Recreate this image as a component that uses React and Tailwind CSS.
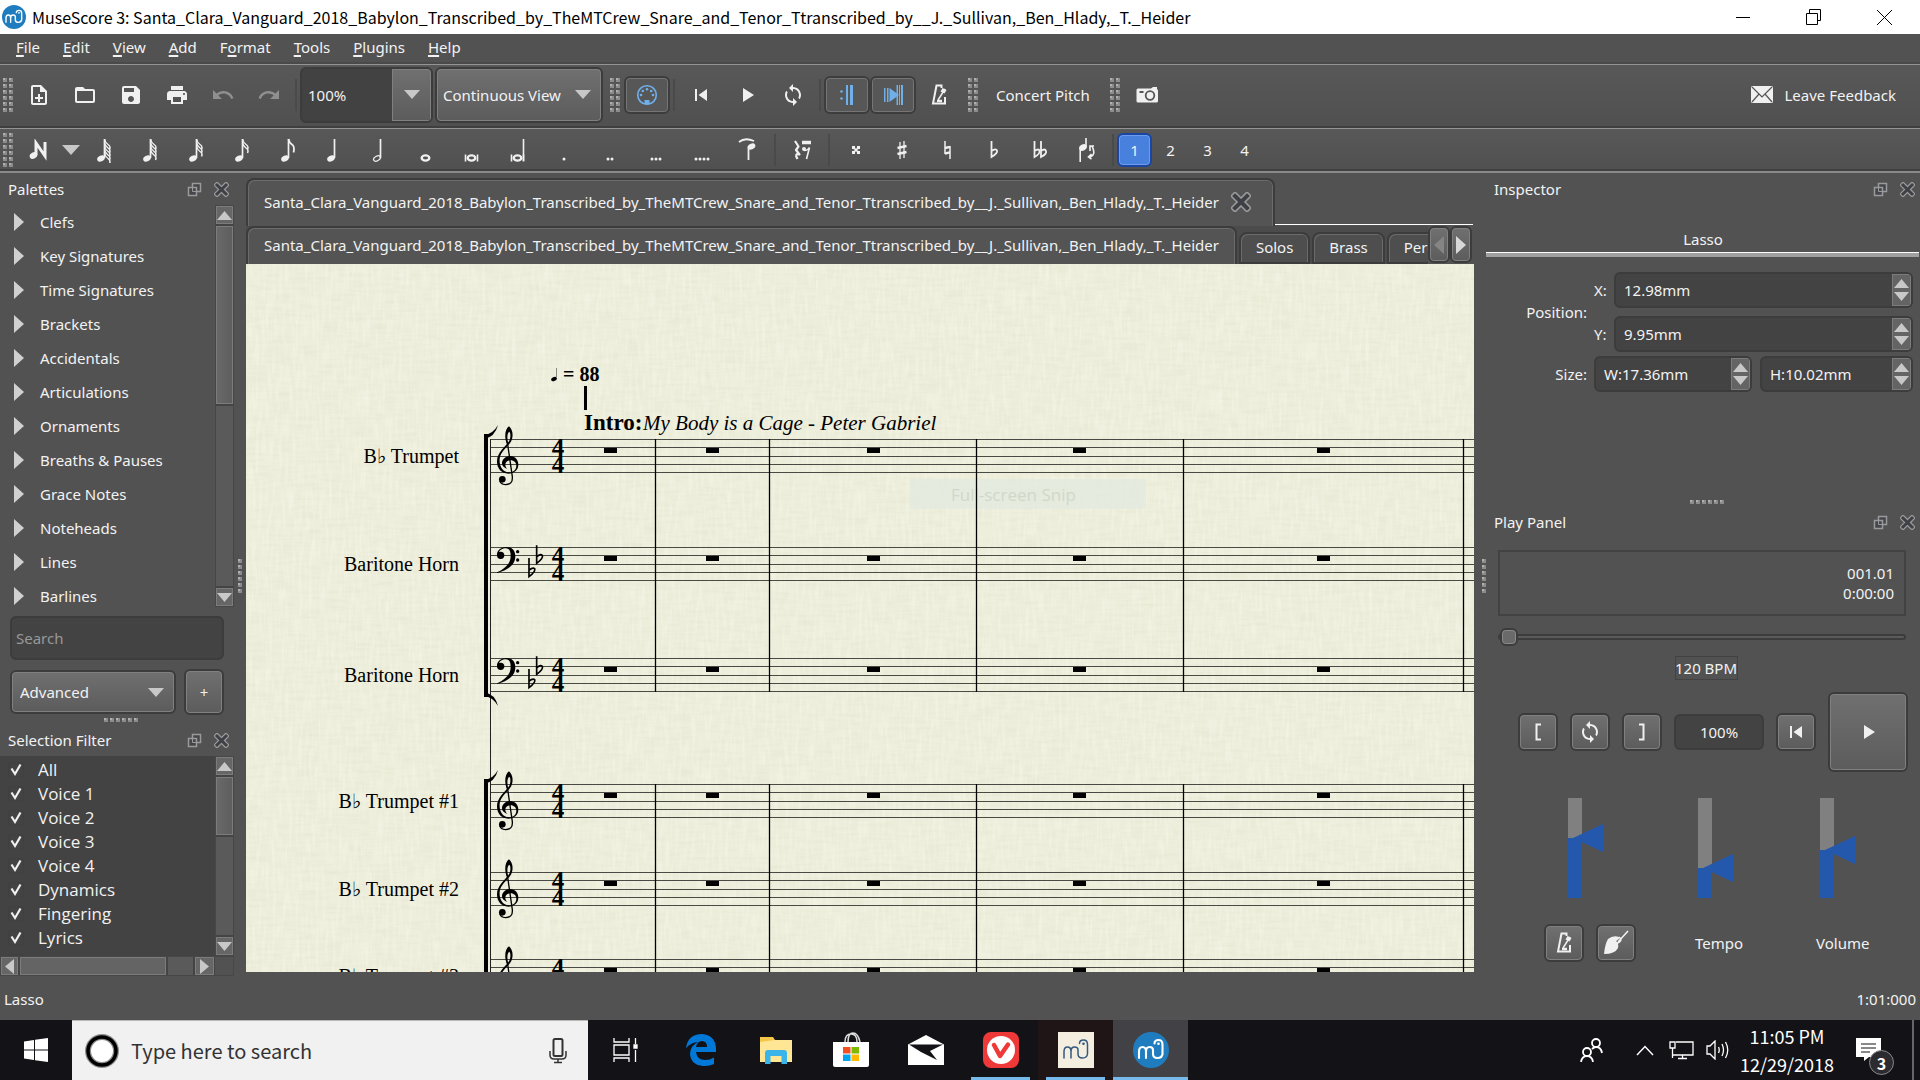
import { useState } from "react";
import {
    MdFolderOpen,
    MdLoop,
    MdOutlineNoteAdd,
    MdPlayArrow,
    MdPrint,
    MdRedo,
    MdSave,
    MdSkipPrevious,
    MdUndo,
} from "react-icons/md";

const SCORE_NAME =
    "Santa_Clara_Vanguard_2018_Babylon_Transcribed_by_TheMTCrew_Snare_and_Tenor_Ttranscribed_by__J._Sullivan,_Ben_Hlady,_T._Heider";

// [before, mnemonic, after]
const MENUS = [
    ["", "F", "ile"],
    ["", "E", "dit"],
    ["", "V", "iew"],
    ["", "A", "dd"],
    ["F", "o", "rmat"],
    ["", "T", "ools"],
    ["", "P", "lugins"],
    ["", "H", "elp"],
];

const PALETTES = [
    "Clefs",
    "Key Signatures",
    "Time Signatures",
    "Brackets",
    "Accidentals",
    "Articulations",
    "Ornaments",
    "Breaths & Pauses",
    "Grace Notes",
    "Noteheads",
    "Lines",
    "Barlines",
];

const FILTERS = [
    "All",
    "Voice 1",
    "Voice 2",
    "Voice 3",
    "Voice 4",
    "Dynamics",
    "Fingering",
    "Lyrics",
    "Chord Symbols",
];

const STAVES = [
    { top: 175, name: "Trumpet", flat: true, clef: "treble" },
    { top: 283, name: "Baritone Horn", clef: "bass" },
    { top: 394, name: "Baritone Horn", clef: "bass" },
    { top: 520, name: "Trumpet #1", flat: true, clef: "treble" },
    { top: 608, name: "Trumpet #2", flat: true, clef: "treble" },
    { top: 695, name: "Trumpet #3", flat: true, clef: "treble" },
];

const BARLINES = [409, 523, 730, 937, 1217];
const RESTS = [358, 460, 621, 827, 1071];

/* ---------- small shared pieces ---------- */

const Arrow = ({ dir, className = "h-[9px] w-[15px] text-[#c8c8c8]" }) => {
    const d = {
        up: "M0 10 L5 0 L10 10Z",
        down: "M0 0 L5 10 L10 0Z",
        left: "M10 0 L0 5 L10 10Z",
        right: "M0 0 L10 5 L0 10Z",
    }[dir];
    return (
        <svg viewBox="0 0 10 10" preserveAspectRatio="none" className={className} aria-hidden="true">
            <path d={d} fill="currentColor" />
        </svg>
    );
};

const Grip = ({ cols = 2, rows = 6 }) => (
    <svg width={cols * 6 - 2} height={rows * 6 - 2} aria-hidden="true" className="shrink-0">
        {Array.from({ length: cols * rows }, (_, i) => {
            const x = (i % cols) * 6;
            const y = Math.floor(i / cols) * 6;
            return (
                <g key={i}>
                    <rect x={x} y={y} width="4" height="4" fill="#8c8c8c" />
                    <rect x={x} y={y} width="2" height="2" fill="#b0b0b0" />
                </g>
            );
        })}
    </svg>
);

const ToolButton = ({ label, children, on, className = "w-[46px]" }) => (
    <button
        type="button"
        aria-label={label}
        className={`flex h-[38px] shrink-0 items-center justify-center ${className} ${
            on
                ? "rounded-md border-2 border-[#3d3d3d] bg-[#575757] text-[#6fb0ea] shadow-[inset_0_0_0_1px_#757575]"
                : "text-[#f0f0f0]"
        }`}
    >
        {children}
    </button>
);

const RaisedButton = ({ label, children, className = "h-[38px] w-10" }) => (
    <button
        type="button"
        aria-label={label}
        className={`flex shrink-0 items-center justify-center rounded-md border-2 border-[#3c3c3c] bg-linear-to-b from-[#707070] to-[#5c5c5c] text-[#f0f0f0] shadow-[inset_0_0_0_1px_#808080] ${className}`}
    >
        {children}
    </button>
);

const Separator = () => <span className="mx-[3px] h-8 w-[2px] shrink-0 bg-[#4a4a4a]" />;

const CloseGlyph = ({ size = 15 }) => (
    <svg width={size} height={size} viewBox="0 0 15 15" aria-hidden="true">
        <path d="M3 3L12 12M12 3L3 12" stroke="#9a9a9a" strokeWidth="5.4" strokeLinecap="square" />
        <path d="M3 3L12 12M12 3L3 12" stroke="#3f4046" strokeWidth="3" strokeLinecap="square" />
    </svg>
);

const DockHeader = ({ title }) => (
    <header className="flex h-8 shrink-0 items-center pr-[5px] pl-2">
        <h2 className="flex-1">{title}</h2>
        <button type="button" aria-label={`Float ${title}`} className="mr-3">
            <svg width="15" height="15" viewBox="0 0 15 15" fill="none" aria-hidden="true">
                <path d="M5.500 1.500H13.500V9.500H5.500Z" fill="#45464c" stroke="#9a9a9a" strokeWidth="1.500" />
                <path d="M1.500 5.500H9.500V13.500H1.500Z" fill="#45464c" stroke="#9a9a9a" strokeWidth="1.500" />
                <path d="M5.500 5.500H9.500V9.500H5.500Z" stroke="#9a9a9a" />
            </svg>
        </button>
        <button type="button" aria-label={`Close ${title}`}>
            <CloseGlyph />
        </button>
    </header>
);

const VerticalScroll = ({ thumb }) => (
    <div className="flex w-[19px] shrink-0 flex-col border border-[#474747] bg-[#5a5a5a]">
        <button type="button" aria-label="Scroll up" className="flex h-[18px] items-center justify-center border border-[#7c7c7c] bg-[#666666]">
            <Arrow dir="up" />
        </button>
        <div className={`mt-[2px] border border-[#7c7c7c] bg-linear-to-r from-[#696969] to-[#5e5e5e] shadow-[0_2px_0_#444444,0_-2px_0_#444444] ${thumb}`} />
        <span className="flex-1" />
        <button type="button" aria-label="Scroll down" className="flex h-[18px] items-center justify-center border border-[#7c7c7c] bg-[#666666] shadow-[0_-2px_0_#444444]">
            <Arrow dir="down" />
        </button>
    </div>
);

/* ---------- toolbar icons ---------- */

const Note = ({ flags = 0, open = false }) => (
    <svg width="20" height="26" viewBox="0 0 20 26" aria-hidden="true">
        <ellipse
            cx="7"
            cy="21.500"
            rx={open ? 3.6 : 4}
            ry={open ? 2.3 : 2.9}
            transform="rotate(-28 7 21.500)"
            fill={open ? "none" : "currentColor"}
            stroke={open ? "currentColor" : "none"}
            strokeWidth="1.300"
        />
        <path d="M10.500 2V21" stroke="currentColor" strokeWidth="1.700" />
        {Array.from({ length: flags }, (_, i) => (
            <path
                key={i}
                d={`M10.500 ${2 + i * 3.5}q.5 3.500 3.500 5.500t1.500 ${flags === 1 ? 8 : 5}`}
                fill="none"
                stroke="currentColor"
                strokeWidth={flags === 1 ? 1.8 : 1.5}
            />
        ))}
    </svg>
);

const Whole = ({ sides, stem }) => (
    <svg width="20" height="26" viewBox="0 0 20 26" aria-hidden="true" fill="none" stroke="currentColor">
        <ellipse cx="9.500" cy="21" rx="3.800" ry="2.600" strokeWidth="2.400" />
        {sides && <path d="M3.500 17.500V24.500M15.500 17.500V24.500" strokeWidth="1.600" />}
        {stem && <path d="M15.500 2V24" strokeWidth="1.600" />}
    </svg>
);

const Dots = ({ count }) => (
    <svg width="20" height="26" viewBox="0 0 20 26" aria-hidden="true">
        {Array.from({ length: count }, (_, i) => (
            <circle key={i} cx={10 + (i - (count - 1) / 2) * 4} cy="22" r="1.500" fill="currentColor" />
        ))}
    </svg>
);

const TieIcon = () => (
    <svg width="22" height="26" viewBox="0 0 22 26" aria-hidden="true">
        <path d="M2 5Q8 0 17 4" fill="none" stroke="currentColor" strokeWidth="1.800" />
        <ellipse cx="14.500" cy="9.500" rx="4" ry="2.900" transform="rotate(-28 14.500 9.500)" fill="currentColor" />
        <path d="M11.500 10V23" stroke="currentColor" strokeWidth="1.800" />
    </svg>
);

const RestIcon = () => (
    <svg width="22" height="26" viewBox="0 0 22 26" aria-hidden="true" fill="none" stroke="currentColor">
        <path d="M4 4L7.500 9.500L5 13L8.500 17.500Q3 16 6.500 22" strokeWidth="2.200" strokeLinejoin="round" />
        <path d="M11 5.500H20" strokeWidth="3.500" />
        <circle cx="13" cy="12" r="2" fill="currentColor" stroke="none" />
        <path d="M13 13.500Q17 13.500 18.500 10.500L15.500 22" strokeWidth="1.600" />
    </svg>
);

const DoubleSharpIcon = () => (
    <svg width="20" height="26" viewBox="0 0 20 26" aria-hidden="true" fill="currentColor">
        <path d="M6 9h3v1.500L10 12l1-1.500V9h3v3h-1.500L11 13l1.500 1H14v3h-3v-1.500L10 14l-1 1.500V17H6v-3h1.500L9 13l-1.500-1H6z" />
    </svg>
);

const SharpIcon = () => (
    <svg width="20" height="26" viewBox="0 0 20 26" aria-hidden="true" stroke="currentColor">
        <path d="M8 5V22M12 4V21" strokeWidth="1.300" />
        <path d="M5.500 11L14.500 9M5.500 17L14.500 15" strokeWidth="2.400" />
    </svg>
);

const NaturalIcon = () => (
    <svg width="20" height="26" viewBox="0 0 20 26" aria-hidden="true" stroke="currentColor">
        <path d="M7 4V17M12 9V22" strokeWidth="1.500" />
        <path d="M7 11L12 9.800M7 16.500L12 15.300" strokeWidth="2.400" />
    </svg>
);

const FlatIcon = ({ twice }) => (
    <svg width="20" height="26" viewBox="0 0 20 26" aria-hidden="true" fill="none" stroke="currentColor" strokeWidth="1.800">
        <path d={twice ? "M4.500 4V20Q10 17 9.500 14T4.500 14" : "M7.500 4V20Q14 16 13 13.500T7.500 14"} />
        {twice && <path d="M11 4V20Q17 17 16 14T11 14" />}
    </svg>
);

const FlipIcon = () => (
    <svg width="22" height="26" viewBox="0 0 22 26" aria-hidden="true">
        <ellipse cx="8" cy="10.500" rx="4" ry="3" transform="rotate(-28 8 10.500)" fill="currentColor" />
        <path d="M5.200 11V25M11 1V10" stroke="currentColor" strokeWidth="1.600" />
        <path d="M14 20Q20 19 18.500 13T15 10M16.500 17L13.500 20L16.500 22M15 14V9h4" fill="none" stroke="currentColor" strokeWidth="1.600" />
    </svg>
);

const NoteInputIcon = () => (
    <svg width="20" height="22" viewBox="0 0 20 22" aria-hidden="true">
        <ellipse cx="4.500" cy="16.500" rx="4" ry="3" transform="rotate(-28 4.500 16.500)" fill="currentColor" />
        <path d="M7 16V4L16 17V3" fill="none" stroke="currentColor" strokeWidth="3" />
    </svg>
);

const MetronomeIcon = () => (
    <svg width="18" height="24" viewBox="0 0 18 24" aria-hidden="true" fill="none" stroke="currentColor">
        <path d="M11.500 5V2.500H6.500L3 20.500H15V14" strokeWidth="2" />
        <path d="M8 17L15 6" strokeWidth="1.500" />
        <path d="M12.500 5l4 2-2 3.500-4-2z" fill="currentColor" stroke="none" />
        <path d="M7 18h5" strokeWidth="2.500" />
    </svg>
);

const MidiIcon = () => (
    <svg width="22" height="22" viewBox="0 0 22 22" aria-hidden="true">
        <circle cx="11" cy="11" r="9.300" fill="none" stroke="currentColor" strokeWidth="1.600" />
        {[[5, 11], [6.8, 7], [11, 5.3], [15.2, 7], [17, 11]].map(([x, y]) => (
            <circle key={x} cx={x} cy={y} r="1.300" fill="currentColor" />
        ))}
        <path d="M8.500 16h5v4.500h-5z" fill="currentColor" />
    </svg>
);

const RepeatIcon = () => (
    <svg width="22" height="22" viewBox="0 0 22 22" aria-hidden="true" fill="currentColor">
        <path d="M10 1h2v20h-2zM14 1h3v20h-3z" />
        <circle cx="5.500" cy="7.500" r="1.300" />
        <circle cx="5.500" cy="14.500" r="1.300" />
    </svg>
);

const PanIcon = () => (
    <svg width="22" height="22" viewBox="0 0 22 22" aria-hidden="true" fill="currentColor">
        <path d="M2 4h1.500v14H2zM5 4h1.500v14H5zM14.500 1H16v20h-1.500zM17 1h1v20h-1zM19 1h2v20h-2z" />
        <path d="M7.500 4L17 11L7.500 18z" />
    </svg>
);

const CameraIcon = () => (
    <svg width="24" height="20" viewBox="0 0 24 20" aria-hidden="true">
        <path d="M3 3.500H16L18 2h4v2q1 .5 1 1.500V16q0 1.500-1.500 1.500H3Q1.500 17.500 1.500 16V5Q1.500 3.500 3 3.500z" fill="#f0f0f0" />
        <circle cx="15" cy="10.500" r="4.300" fill="none" stroke="#555555" strokeWidth="1.800" />
        <path d="M4.500 6h4v2h-4z" fill="#555555" />
    </svg>
);

const MuseLogo = ({ size, square }) => {
    const ink = square ? "#33597f" : "#ffffff";
    return (
        <svg width={size} height={size} viewBox="0 0 36 36" aria-hidden="true">
            {square ? <rect width="36" height="36" fill="#f4eee0" /> : <circle cx="18" cy="18" r="18" fill="#1f7dbf" />}
            <path
                d="M6 26V19.500Q6 15 9.500 15T13 19.500V26M13 19.500Q13 15 16.500 15T20 18V22Q20 26 24.500 26T29.500 22V12.500Q29.500 8 25.500 8T21.500 11.500"
                fill="none"
                stroke={ink}
                strokeWidth={square ? 1.5 : 2.1}
                strokeLinecap="round"
            />
            <circle cx="25.500" cy="11.800" r="1.300" fill={ink} />
        </svg>
    );
};

/* ---------- window chrome ---------- */

const TitleBar = () => (
    <header className="flex h-[34px] shrink-0 items-center bg-white pl-0.5 font-['Noto_Sans_CJK_SC',sans-serif] text-base leading-6 text-black">
        <MuseLogo size={24} />
        <h1 className="ml-1.5 flex-1 whitespace-nowrap">MuseScore 3: {SCORE_NAME}</h1>
        <button type="button" aria-label="Minimize" className="flex h-full w-[70px] items-center justify-center">
            <svg width="14" height="14"><path d="M0 7.500H14" stroke="#000" /></svg>
        </button>
        <button type="button" aria-label="Restore" className="flex h-full w-[70px] items-center justify-center">
            <svg width="15" height="16" fill="none" stroke="#000">
                <path d="M.5 4.500H11.500V15.500H.5ZM3.500 4V.5H14.500V11.500H12" />
            </svg>
        </button>
        <button type="button" aria-label="Close" className="flex h-full w-[72px] items-center justify-center">
            <svg width="15" height="15" stroke="#000"><path d="M0 0L15 15M15 0L0 15" /></svg>
        </button>
    </header>
);

const MenuBar = () => (
    <nav className="flex h-[30px] shrink-0 items-center border-b-2 border-[#4a4a4a] pb-0.5 pl-1">
        {MENUS.map(([pre, key, post]) => (
            <button key={key + post} type="button" className="pr-[11px] pl-3">
                {pre}
                <span className="underline decoration-2 underline-offset-2">{key}</span>
                {post}
            </button>
        ))}
    </nav>
);

const FileToolbar = () => (
    <div className="flex h-16 shrink-0 items-center border-t border-b-2 border-t-[#949494] border-b-[#3f3f3f] bg-linear-to-b from-[#585858] to-[#505050] pb-0.5">
        <div className="flex w-4 shrink-0 justify-center"><Grip /></div>
        <ToolButton label="New"><MdOutlineNoteAdd size={24} /></ToolButton>
        <ToolButton label="Open"><MdFolderOpen size={24} /></ToolButton>
        <ToolButton label="Save"><MdSave size={24} /></ToolButton>
        <ToolButton label="Print"><MdPrint size={24} /></ToolButton>
        <ToolButton label="Undo"><MdUndo size={24} className="text-[#8f8f8f]" /></ToolButton>
        <ToolButton label="Redo"><MdRedo size={24} className="text-[#8f8f8f]" /></ToolButton>
        <Separator />
        <div className="flex h-[56px] w-[133px] shrink-0 overflow-hidden rounded-md border-2 border-[#3c3c3c] bg-[#424242]">
            <input aria-label="Zoom" defaultValue="100%" className="w-0 min-w-0 flex-1 pl-1.5 outline-none" />
            <button type="button" aria-label="Zoom presets" className="flex w-[39px] items-center justify-center border border-[#808080] bg-linear-to-b from-[#707070] to-[#5c5c5c]">
                <Arrow dir="down" className="h-[9px] w-4 text-[#c8c8c8]" />
            </button>
        </div>
        <div className="relative ml-[2px] shrink-0">
            <select aria-label="View mode" className="h-[56px] w-[168px] appearance-none rounded-md border-2 border-[#3c3c3c] bg-linear-to-b from-[#707070] to-[#5c5c5c] pl-1.5 shadow-[inset_0_0_0_1px_#808080]">
                <option>Continuous View</option>
                <option>Page View</option>
            </select>
            <span className="pointer-events-none absolute inset-y-0 right-3 flex items-center">
                <Arrow dir="down" className="h-[9px] w-4 text-[#c8c8c8]" />
            </span>
        </div>
        <div className="flex w-[21px] shrink-0 justify-end pr-1"><Grip /></div>
        <ToolButton label="MIDI input" on><MidiIcon /></ToolButton>
        <Separator />
        <ToolButton label="Rewind"><MdSkipPrevious size={24} /></ToolButton>
        <ToolButton label="Play"><MdPlayArrow size={24} /></ToolButton>
        <ToolButton label="Loop"><MdLoop size={24} /></ToolButton>
        <Separator />
        <ToolButton label="Play repeats" on><RepeatIcon /></ToolButton>
        <ToolButton label="Pan score" on><PanIcon /></ToolButton>
        <ToolButton label="Metronome"><MetronomeIcon /></ToolButton>
        <div className="flex w-[22px] shrink-0 justify-center"><Grip /></div>
        <button type="button" className="ml-3 whitespace-nowrap">Concert Pitch</button>
        <div className="ml-5 flex shrink-0"><Grip /></div>
        <ToolButton label="Image capture" className="ml-1 w-[46px]"><CameraIcon /></ToolButton>
        <button type="button" className="mr-6 ml-auto flex items-center gap-3 whitespace-nowrap">
            <svg width="22" height="17" viewBox="0 0 22 17" aria-hidden="true">
                <rect width="22" height="17" rx="1.500" fill="#f0f0f0" />
                <path d="M1 1L11 11L21 1M1 16L8 8M21 16L14 8" fill="none" stroke="#555555" strokeWidth="1.200" />
            </svg>
            Leave Feedback
        </button>
    </div>
);

const NoteToolbar = () => (
    <div className="flex h-[45px] shrink-0 items-center border-t border-b-2 border-t-[#949494] border-b-[#8a8a8a] bg-linear-to-b from-[#585858] to-[#505050] shadow-[inset_0_-2px_0_#404040]">
        <div className="flex w-4 shrink-0 justify-center"><Grip /></div>
        <ToolButton label="Note input"><NoteInputIcon /></ToolButton>
        <button type="button" aria-label="Note input mode" className="w-[19px]">
            <Arrow dir="down" className="h-[10px] w-[18px] text-[#c8c8c8]" />
        </button>
        <ToolButton label="128th note"><Note flags={5} /></ToolButton>
        <ToolButton label="64th note"><Note flags={4} /></ToolButton>
        <ToolButton label="32nd note"><Note flags={3} /></ToolButton>
        <ToolButton label="16th note"><Note flags={2} /></ToolButton>
        <ToolButton label="Eighth note"><Note flags={1} /></ToolButton>
        <ToolButton label="Quarter note"><Note /></ToolButton>
        <ToolButton label="Half note"><Note open /></ToolButton>
        <ToolButton label="Whole note"><Whole /></ToolButton>
        <ToolButton label="Double whole note"><Whole sides /></ToolButton>
        <ToolButton label="Longa"><Whole sides stem /></ToolButton>
        <ToolButton label="Dot"><Dots count={1} /></ToolButton>
        <ToolButton label="Double dot"><Dots count={2} /></ToolButton>
        <ToolButton label="Triple dot"><Dots count={3} /></ToolButton>
        <ToolButton label="Quadruple dot"><Dots count={4} /></ToolButton>
        <ToolButton label="Tie"><TieIcon /></ToolButton>
        <Separator />
        <ToolButton label="Rest"><RestIcon /></ToolButton>
        <Separator />
        <ToolButton label="Double sharp"><DoubleSharpIcon /></ToolButton>
        <ToolButton label="Sharp"><SharpIcon /></ToolButton>
        <ToolButton label="Natural"><NaturalIcon /></ToolButton>
        <ToolButton label="Flat"><FlatIcon /></ToolButton>
        <ToolButton label="Double flat"><FlatIcon twice /></ToolButton>
        <ToolButton label="Flip direction"><FlipIcon /></ToolButton>
        <Separator />
        <button type="button" className="h-[34px] w-[35px] shrink-0 rounded-md border-2 border-[#1a45a0] bg-[#4880dd] shadow-[inset_0_0_0_1px_#6d9cec]">
            1
        </button>
        {["2", "3", "4"].map((v) => (
            <button key={v} type="button" className="w-[37px]">{v}</button>
        ))}
    </div>
);

/* ---------- left dock ---------- */

const LeftDock = () => {
    const [checked, setChecked] = useState(FILTERS);

    const toggle = (name) =>
        setChecked((prev) => (prev.includes(name) ? prev.filter((n) => n !== name) : [...prev, name]));

    return (
        <aside className="flex w-[246px] shrink-0">
            <div className="flex w-[234px] flex-col pb-0.5">
                <DockHeader title="Palettes" />
                <div className="flex min-h-0 flex-1">
                    <ul className="min-h-0 flex-1 overflow-hidden">
                        {PALETTES.map((p) => (
                            <li key={p}>
                                <button type="button" className="flex h-[34px] w-full items-center gap-4 pl-3.5">
                                    <Arrow dir="right" className="h-[18px] w-2.5 text-[#d0d0d0]" />
                                    {p}
                                </button>
                            </li>
                        ))}
                    </ul>
                    <VerticalScroll thumb="h-[178px]" />
                </div>
                <input
                    aria-label="Search palettes"
                    placeholder="Search"
                    className="mx-2.5 mt-[9px] h-11 shrink-0 rounded-md border-2 border-[#3c3c3c] bg-[#434343] px-1 outline-none placeholder:text-[#989898]"
                />
                <div className="mx-2.5 mt-[9px] flex h-[46px] shrink-0 items-center gap-2">
                    <div className="relative flex-1">
                        <select aria-label="Workspace" className="h-11 w-full appearance-none rounded-md border-2 border-[#3c3c3c] bg-linear-to-b from-[#707070] to-[#5c5c5c] pl-2 shadow-[inset_0_0_0_1px_#808080]">
                            <option>Advanced</option>
                            <option>Basic</option>
                        </select>
                        <span className="pointer-events-none absolute inset-y-0 right-3 flex items-center">
                            <Arrow dir="down" className="h-[9px] w-4 text-[#c8c8c8]" />
                        </span>
                    </div>
                    <RaisedButton label="Add workspace" className="h-[46px] w-10">+</RaisedButton>
                </div>
                <div className="flex h-[9px] shrink-0 items-center justify-center pl-2"><Grip cols={6} rows={1} /></div>
                <DockHeader title="Selection Filter" />
                <div className="flex h-[200px] shrink-0">
                    <ul className="flex-1 overflow-hidden bg-[#434343] pt-[2px] font-['Open_Sans',sans-serif] text-[17px]">
                        {FILTERS.map((f) => (
                            <li key={f}>
                                <label className="flex h-6 items-center">
                                    <span className="relative ml-2 flex size-4">
                                        <input
                                            type="checkbox"
                                            checked={checked.includes(f)}
                                            onChange={() => toggle(f)}
                                            className="peer size-4 appearance-none rounded-sm border border-[#3f3f3f]"
                                        />
                                        <svg viewBox="0 0 16 16" className="pointer-events-none absolute inset-0 hidden peer-checked:block" aria-hidden="true">
                                            <path d="M3.500 6.500L7 12L12.500 2.500" fill="none" stroke="#f0f0f0" strokeWidth="2.200" />
                                        </svg>
                                    </span>
                                    <span className="ml-3.5">{f}</span>
                                </label>
                            </li>
                        ))}
                    </ul>
                    <VerticalScroll thumb="h-[58px]" />
                </div>
                <div className="flex h-5 shrink-0 border border-[#474747] bg-[#5a5a5a]">
                    <button type="button" aria-label="Scroll left" className="flex w-[17px] items-center justify-center border border-[#7c7c7c] bg-[#666666]">
                        <Arrow dir="left" className="h-[15px] w-[9px] text-[#c8c8c8]" />
                    </button>
                    <div className="ml-[2px] w-[146px] border border-[#7c7c7c] bg-[#646464] shadow-[2px_0_0_#444444,-2px_0_0_#444444]" />
                    <span className="flex-1" />
                    <button type="button" aria-label="Scroll right" className="flex w-[19px] items-center justify-center border border-[#7c7c7c] bg-[#666666] shadow-[-2px_0_0_#444444]">
                        <Arrow dir="right" className="h-[15px] w-[9px] text-[#c8c8c8]" />
                    </button>
                    <span className="w-[19px] border-l border-[#444444] bg-[#525252]" />
                </div>
            </div>
            <div className="flex w-3 items-center justify-center"><Grip cols={1} /></div>
        </aside>
    );
};

/* ---------- score ---------- */

const TrebleClef = ({ top }) => (
    <g transform={`translate(214 ${top - 89}) scale(.3333)`}>
        <path d="M141 283C132 262 135 236 147 229C157 238 161 254 155 270C149 288 122 302 119 326C117 348 128 367 146 367C161 367 169 358 169 347C169 338 162 331 152 331C142 331 136 337 136 344C136 350 139 354 143 358C133 354 126 348 126 340C126 327 138 318 151 318C165 318 175 330 175 344C175 360 161 371 145 371C124 371 111 356 111 334C111 308 136 290 147 274C152 266 153 250 148 245C142 248 140 262 145 281Z" />
        <path d="M142 276L157 380Q159 404 136 404Q122 403 119 392" fill="none" stroke="#000" strokeWidth="4" />
        <circle cx="127" cy="388" r="10" />
    </g>
);

const BassClef = ({ top }) => (
    <g transform={`translate(214 ${top - 197}) scale(.3333)`}>
        <path d="M111 616C110 600 124 591 139 591C157 591 166 603 166 619C166 645 143 661 112 669L111 667C136 655 152 641 152 617C152 603 148 595 137 595C128 595 118 600 117 608Z" />
        <circle cx="122" cy="616" r="11" />
        <circle cx="173" cy="605" r="5" />
        <circle cx="173" cy="630" r="5" />
        <g fill="none" stroke="#000" strokeWidth="5">
            <path d="M230 586V640Q251 624 247 616Q241 611 231 620" />
            <path d="M207 624V680Q228 664 224 656Q218 651 208 660" />
        </g>
    </g>
);

const Staff = ({ top, name, flat, clef }) => (
    <g>
        {[0, 8, 17, 25, 33].map((dy) => (
            <line key={dy} x1="244" x2="100%" y1={top + dy + 0.5} y2={top + dy + 0.5} stroke="#4a4a44" />
        ))}
        <text x="213" y={top + 24} textAnchor="end" fontSize="20">
            {flat && (
                <>
                    B<tspan fontFamily="DejaVu Sans" fontSize="20">♭</tspan>{" "}
                </>
            )}
            {name}
        </text>
        {clef === "treble" ? <TrebleClef top={top} /> : <BassClef top={top} />}
        <g fontSize="25" fontWeight="bold" textAnchor="middle">
            <text x="312" y={top + 17}>4</text>
            <text x="312" y={top + 34}>4</text>
        </g>
        {RESTS.map((x) => (
            <rect key={x} x={x} y={top + 9} width="13" height="5" />
        ))}
    </g>
);

const Score = () => (
    <svg
        className="block min-h-0 w-full flex-1 bg-[#edeedb] font-['Liberation_Serif',serif]"
        role="img"
        aria-label="Score"
    >
        <defs>
            <filter id="weft" x="0" y="0" width="100%" height="100%">
                <feTurbulence type="fractalNoise" baseFrequency=".04 .3" numOctaves="2" seed="4" />
                <feColorMatrix values="0 0 0 0 .6  0 0 0 0 .6  0 0 0 0 .45  .3 0 0 0 -.12" />
            </filter>
            <filter id="warp" x="0" y="0" width="100%" height="100%">
                <feTurbulence type="fractalNoise" baseFrequency=".3 .04" numOctaves="2" seed="9" />
                <feColorMatrix values="0 0 0 0 1  0 0 0 0 1  0 0 0 0 .92  .8 0 0 0 -.35" />
            </filter>
        </defs>
        <rect width="100%" height="100%" filter="url(#weft)" />
        <rect width="100%" height="100%" filter="url(#warp)" />

        {/* fading snip menu entry */}
        <rect x="664" y="215" width="236" height="30" fill="#e2eade" opacity=".8" />
        <text x="705" y="237" fontSize="17" fontFamily="Open Sans" fill="#d3d7cb">Full-screen Snip</text>

        {STAVES.map((s) => (
            <Staff key={s.top} {...s} />
        ))}

        {/* system line, barlines and brackets */}
        <line x1="244.500" x2="244.500" y1="175" y2="100%" stroke="#222" />
        {BARLINES.map((x) => (
            <g key={x} stroke="#000" strokeWidth="1.300">
                <line x1={x + 0.5} x2={x + 0.5} y1="175" y2="428" />
                <line x1={x + 0.5} x2={x + 0.5} y1="520" y2="100%" />
            </g>
        ))}
        <rect x="238" y="170" width="4" height="263" />
        <path d="M238 171Q247 170 252 161Q249 173 238 175ZM238 432Q247 433 252 442Q249 430 238 428Z" />
        <rect x="238" y="515" width="4" height="100%" />
        <path d="M238 516Q247 515 252 506Q249 518 238 520Z" />

        {/* tempo and rehearsal text */}
        <ellipse cx="308" cy="115" rx="3" ry="2" transform="rotate(-25 308 115)" />
        <path d="M310.500 104V114" stroke="#8a8a80" />
        <text x="317" y="117" fontSize="20" fontWeight="bold">= 88</text>
        <rect x="338" y="122" width="3" height="24" />
        <text x="338" y="166" fontSize="23" fontWeight="bold">Intro:</text>
        <text x="397" y="166" fontSize="21" fontStyle="italic">My Body is a Cage - Peter Gabriel</text>
    </svg>
);

const ScoreArea = () => (
    <main className="flex min-w-0 flex-1 flex-col pt-[5px] pb-1.5">
        <div className="flex h-12 shrink-0 items-stretch">
            <div className="flex shrink-0 items-center rounded-t-lg border-2 border-b-0 border-[#3c3c3c] bg-[#545454] pr-[22px] pb-0.5 pl-4 shadow-[inset_1px_1px_0_#6b6b6b,inset_-1px_0_0_#6b6b6b]">
                <button type="button" className="whitespace-nowrap">{SCORE_NAME}</button>
                <button type="button" aria-label="Close score" className="ml-3"><CloseGlyph size={20} /></button>
            </div>
            <span className="mr-px mb-px flex-1 border-b border-white" />
        </div>
        <div className="flex h-[38px] shrink-0">
            <div className="flex min-w-0 flex-1 items-end gap-[2px] overflow-hidden bg-[#4b4b4b]">
                <button type="button" className="h-full shrink-0 rounded-t-lg border-2 border-b-0 border-[#3c3c3c] bg-[#545454] px-4 pb-0.5 whitespace-nowrap shadow-[inset_1px_1px_0_#6b6b6b,inset_-1px_0_0_#6b6b6b]">
                    {SCORE_NAME}
                </button>
                {["Solos", "Brass", "Percussion"].map((t) => (
                    <button key={t} type="button" className="h-8 shrink-0 rounded-t-lg border-2 border-[#3c3c3c] bg-[#4e4e4e] px-[15px] pb-0.5 shadow-[inset_1px_1px_0_#6b6b6b,inset_-1px_0_0_#6b6b6b]">
                        {t}
                    </button>
                ))}
            </div>
            <div className="flex shrink-0 pr-[2px]">
                <RaisedButton label="Previous part" className="h-[37px] w-[22px]">
                    <Arrow dir="left" className="h-[18px] w-2.5 text-[#858585]" />
                </RaisedButton>
                <RaisedButton label="Next part" className="h-[37px] w-[22px]">
                    <Arrow dir="right" className="h-[18px] w-2.5 text-[#d8d8d8]" />
                </RaisedButton>
            </div>
        </div>
        <Score />
    </main>
);

/* ---------- right dock ---------- */

const SpinField = ({ id, label, value, className = "flex-1" }) => (
    <div className={`flex h-9 min-w-0 overflow-hidden rounded-md border-2 border-[#3c3c3c] bg-[#434343] ${className}`}>
        <input id={id} aria-label={label} defaultValue={value} className="w-0 min-w-0 flex-1 pl-2 outline-none" />
        <div className="flex w-[19px] flex-col items-center justify-center gap-1 border border-[#7c7c7c] bg-[#646464]">
            <button type="button" aria-label={`Increase ${label}`}><Arrow dir="up" /></button>
            <button type="button" aria-label={`Decrease ${label}`}><Arrow dir="down" /></button>
        </div>
    </div>
);

const Fader = ({ label, level, className = "" }) => (
    <label className={`relative block h-[100px] w-[35px] ${className}`}>
        <svg width="35" height="100" className="block" aria-hidden="true">
            <rect width="14" height="100" fill="#808080" />
            <rect y={100 - level} width="14" height={level} fill="#2458ac" />
            <path d={`M5 ${100 - level}L35 ${86 - level}V${114 - level}Z`} fill="#2458ac" />
        </svg>
        <input
            type="range"
            aria-label={label}
            defaultValue={level}
            className="absolute inset-0 h-full w-full opacity-0 [direction:rtl] [writing-mode:vertical-lr]"
        />
    </label>
);

const RightDock = () => (
    <aside className="flex w-[446px] shrink-0">
        <div className="flex w-3 items-center justify-end"><Grip cols={1} /></div>
        <div className="flex min-w-0 flex-1 flex-col">
            <section className="flex min-h-0 flex-1 flex-col">
                <DockHeader title="Inspector" />
                <h3 className="mt-5 h-[27px] text-center leading-7">Lasso</h3>
                <div className="mr-px h-[5px] border-t border-white bg-[#a0a0a0]" />
                <div className="mt-[15px] flex items-center pr-[7px]">
                    <span className="mr-[7px] w-[101px] text-right">Position:</span>
                    <div className="flex flex-1 flex-col gap-2">
                        <div className="flex items-center">
                            <label htmlFor="pos-x" className="w-5">X:</label>
                            <SpinField id="pos-x" label="X position" value="12.98mm" />
                        </div>
                        <div className="flex items-center">
                            <label htmlFor="pos-y" className="w-5">Y:</label>
                            <SpinField id="pos-y" label="Y position" value="9.95mm" />
                        </div>
                    </div>
                </div>
                <div className="mt-1 flex items-center pr-[7px]">
                    <span className="mr-[7px] w-[101px] text-right">Size:</span>
                    <SpinField id="size-w" label="Width" value="W:17.36mm" className="mr-2 flex-1" />
                    <SpinField id="size-h" label="Height" value="H:10.02mm" className="w-[153px]" />
                </div>
            </section>
            <div className="flex h-2 shrink-0 items-center justify-center pl-2"><Grip cols={6} rows={1} /></div>
            <section className="shrink-0 pb-4">
                <DockHeader title="Play Panel" />
                <div className="mt-3 mr-3.5 ml-3 flex h-[66px] flex-col justify-center border-2 border-[#424242] pr-2.5 text-right">
                    <p>001.01</p>
                    <p>0:00:00</p>
                </div>
                <input
                    type="range"
                    aria-label="Playback position"
                    defaultValue={0}
                    className="mt-3 mr-3.5 ml-3 block h-[18px] w-[408px] appearance-none bg-transparent [&::-webkit-slider-runnable-track]:h-1.5 [&::-webkit-slider-runnable-track]:rounded [&::-webkit-slider-runnable-track]:border-2 [&::-webkit-slider-runnable-track]:border-[#3c3c3c] [&::-webkit-slider-runnable-track]:bg-[#5a5a5a] [&::-webkit-slider-thumb]:-mt-2 [&::-webkit-slider-thumb]:size-[18px] [&::-webkit-slider-thumb]:appearance-none [&::-webkit-slider-thumb]:rounded-md [&::-webkit-slider-thumb]:border-2 [&::-webkit-slider-thumb]:border-[#3c3c3c] [&::-webkit-slider-thumb]:bg-[#6a6a6a] [&::-webkit-slider-thumb]:shadow-[inset_0_0_0_1px_#8a8a8a]"
                />
                <div className="mt-2.5 flex justify-center pl-1.5">
                    <p className="flex h-6 w-[63px] items-center justify-center border border-[#424242] whitespace-nowrap">120 BPM</p>
                </div>
                <div className="mt-3 flex items-center gap-3 pl-8">
                    <RaisedButton label="Loop in"><svg width="14" height="18"><path d="M10 1.500H5.500V16.500H10" fill="none" stroke="#f0f0f0" strokeWidth="2" /></svg></RaisedButton>
                    <RaisedButton label="Loop playback"><MdLoop size={24} /></RaisedButton>
                    <RaisedButton label="Loop out"><svg width="14" height="18"><path d="M4 1.500H8.500V16.500H4" fill="none" stroke="#f0f0f0" strokeWidth="2" /></svg></RaisedButton>
                    <input aria-label="Tempo percent" defaultValue="100%" className="h-9 w-[90px] rounded-md border-2 border-[#3c3c3c] bg-[#434343] text-center outline-none" />
                    <RaisedButton label="Rewind to start"><MdSkipPrevious size={24} /></RaisedButton>
                    <RaisedButton label="Play" className="size-20"><MdPlayArrow size={24} /></RaisedButton>
                </div>
                <div className="mt-[26px] flex pl-[82px]">
                    <Fader label="Metronome volume" level={60} className="mr-[95px]" />
                    <Fader label="Tempo" level={30} className="mr-[87px]" />
                    <Fader label="Volume" level={48} />
                </div>
                <div className="mt-[26px] flex items-center pl-[58px]">
                    <RaisedButton label="Metronome" className="mr-3 h-[38px] w-10"><MetronomeIcon /></RaisedButton>
                    <RaisedButton label="Count-in">
                        <svg width="26" height="26" viewBox="0 0 26 26" aria-hidden="true">
                            <path d="M1 24Q2 14 5 9Q10 5 16 7Q17 9 13 11Q16 13 15 18Q12 24 1 24Z" fill="#f0f0f0" />
                            <path d="M11 14Q18 13 18 9L16 7M15 12L25 1" fill="none" stroke="#f0f0f0" strokeWidth="1.600" />
                        </svg>
                    </RaisedButton>
                    <span className="ml-[59px] w-12 text-center">Tempo</span>
                    <span className="ml-[73px] w-[52px] text-center">Volume</span>
                </div>
            </section>
        </div>
    </aside>
);

/* ---------- taskbar ---------- */

const TaskButton = ({ label, children, className = "" }) => (
    <button type="button" aria-label={label} className={`relative flex w-[75px] shrink-0 items-center justify-center ${className}`}>
        {children}
    </button>
);

const Running = () => <span className="absolute inset-x-2 bottom-0 h-[3px] bg-[#76b9ed]" />;

const Taskbar = () => (
    <footer className="flex h-[60px] shrink-0 bg-[#121217] font-['Noto_Sans_CJK_SC',sans-serif] text-white">
        <button type="button" aria-label="Start" className="flex w-[72px] shrink-0 items-center justify-center">
            <svg width="24" height="24" viewBox="0 0 24 24" fill="#fff" aria-hidden="true">
                <path d="M0 3.400L10 2V11.400H0ZM11 1.800L24 0V11.400H11ZM0 12.500H10V22L0 20.600ZM11 12.500H24V24L11 22.200Z" />
            </svg>
        </button>
        <div className="flex w-[516px] shrink-0 items-center border-t border-[#b8b8b8] bg-[#f1f1f1] px-[13px] text-[#333333]">
            <svg width="34" height="34" aria-hidden="true">
                <circle cx="17" cy="17" r="14" fill="#fff" stroke="#8c8c8c" strokeWidth="6" />
                <circle cx="17" cy="17" r="14" fill="none" stroke="#000" strokeWidth="3.500" />
            </svg>
            <input aria-label="Search Windows" placeholder="Type here to search" className="ml-3 min-w-0 flex-1 text-xl outline-none placeholder:text-[#333333]" />
            <svg width="18" height="26" viewBox="0 0 18 26" fill="none" stroke="#333333" strokeWidth="1.500" className="mr-2" aria-hidden="true">
                <rect x="4.500" y="1" width="9" height="17" rx="1.500" strokeWidth="2" />
                <path d="M1 13V17Q1 21 5 21H13Q17 21 17 17V13M9 21V24.500M5 24.500H13" />
            </svg>
        </div>
        <TaskButton label="Task view">
            <svg width="26" height="24" fill="none" stroke="#fff" strokeWidth="1.300" aria-hidden="true">
                <path d="M1 0V4H16V0M1 24V20H16V24M1 7H16V17H1ZM22.500 0V6M22.500 12V24" />
                <path d="M21 7h3v3h-3z" fill="#fff" />
            </svg>
        </TaskButton>
        <TaskButton label="Edge">
            <svg width="32" height="34" viewBox="0 0 32 34" aria-hidden="true">
                <path d="M1 15Q3 1 17 1Q30 2 31 15V19H11Q12 27 20 27Q25 27 29 24.500V31Q24 33.500 18 33Q6 32 5 21Q5 13 13 9Q6 9.500 1 15ZM11 14H22Q22 8 17 8Q12 8.500 11 14Z" fill="#0078d7" fillRule="evenodd" />
            </svg>
        </TaskButton>
        <TaskButton label="File Explorer">
            <svg width="34" height="28" viewBox="0 0 34 28" aria-hidden="true">
                <path d="M1 1H14L16 4V26H1Z" fill="#f5c748" />
                <path d="M1 6L16 4H33V26H1Z" fill="#ffe694" />
                <path d="M6 28V17Q6 14 9 14H25Q28 14 28 17V28H22.500V20H11.500V28Z" fill="#3bb4ea" />
            </svg>
        </TaskButton>
        <TaskButton label="Microsoft Store">
            <svg width="36" height="36" viewBox="0 0 36 36" aria-hidden="true">
                <path d="M12 10Q12 2 18 2T24 10M15 10Q15 1 20 1T27 10" fill="none" stroke="#ddd" strokeWidth="1.500" />
                <path d="M0 10H36V33Q36 35 34 35H2Q0 35 0 33Z" fill="#fff" />
                <path d="M10 15H17.500V21.500H10Z" fill="#f25022" />
                <path d="M18.500 15H26V21.500H18.500Z" fill="#7fba00" />
                <path d="M10 22.500H17.500V29H10Z" fill="#00a4ef" />
                <path d="M18.500 22.500H26V29H18.500Z" fill="#ffb900" />
            </svg>
        </TaskButton>
        <TaskButton label="Mail">
            <svg width="36" height="30" viewBox="0 0 36 30" aria-hidden="true">
                <path d="M0 9.500L18 0L36 9.500V30H0Z" fill="#fff" />
                <path d="M1 9.500H35L22 16L29 25L13 17Z" fill="#121217" />
            </svg>
        </TaskButton>
        <TaskButton label="Vivaldi">
            <svg width="36" height="36" viewBox="0 0 36 36" aria-hidden="true">
                <rect width="36" height="36" rx="8" fill="#ef3939" />
                <circle cx="18" cy="18" r="14" fill="#fff" />
                <path d="M11 13L17 24L25 12.500" fill="none" stroke="#ef3939" strokeWidth="4.500" strokeLinecap="round" strokeLinejoin="round" />
            </svg>
            <Running />
        </TaskButton>
        <TaskButton label="MuseScore 2" className="bg-[#1f1516]">
            <MuseLogo size={36} square />
            <Running />
        </TaskButton>
        <TaskButton label="MuseScore 3" className="bg-[#414146]">
            <MuseLogo size={36} />
            <span className="absolute inset-x-0 bottom-0 h-[3px] bg-[#76b9ed]" />
        </TaskButton>
        <div className="ml-auto flex shrink-0 items-center">
            <button type="button" aria-label="People">
                <svg width="24" height="24" fill="none" stroke="#fff" strokeWidth="1.800" aria-hidden="true">
                    <circle cx="16" cy="5" r="4" />
                    <circle cx="7" cy="14" r="4" />
                    <path d="M1 24Q2 18 7 18T13 24M12 11Q14 9 16 9Q21 9 22 15" />
                </svg>
            </button>
            <button type="button" aria-label="Show hidden icons" className="ml-8">
                <svg width="18" height="11" fill="none" stroke="#fff" strokeWidth="1.500"><path d="M1 10L9 1.500L17 10" /></svg>
            </button>
            <button type="button" aria-label="Network" className="ml-[15px]">
                <svg width="25" height="20" fill="none" stroke="#fff" strokeWidth="1.300" aria-hidden="true">
                    <path d="M7 2H24V15H4M1 2H6V8H1ZM3.500 8V18M9 18.500H18M13.500 15V18" />
                </svg>
            </button>
            <button type="button" aria-label="Volume" className="ml-3">
                <svg width="24" height="20" fill="none" stroke="#fff" strokeWidth="1.300" aria-hidden="true">
                    <path d="M1 6H4L9 1V19L4 14H1ZM12.500 7Q14 10 12.500 13M16 4Q19 10 16 16M19.500 2Q24 10 19.500 18" />
                </svg>
            </button>
            <div className="ml-2.5 text-center text-lg leading-7">
                <p>11:05 PM</p>
                <p>12/29/2018</p>
            </div>
            <button type="button" aria-label="Notifications" className="relative mr-[30px] ml-[22px]">
                <svg width="26" height="26" viewBox="0 0 26 26" aria-hidden="true">
                    <path d="M0 1H25V20H13L8 24V20H0Z" fill="#fff" />
                    <path d="M5 7H20M5 11H20M5 15H14" stroke="#121217" />
                </svg>
                <span className="absolute -right-3 -bottom-3 flex size-[25px] items-center justify-center rounded-full border border-[#8a8a8a] bg-[#2b2b30] text-base font-bold">
                    3
                </span>
            </button>
            <span className="mr-1.5 h-[60px] w-[2px] bg-[#66666a]" />
        </div>
    </footer>
);

export default function App() {
    return (
        <div className="flex h-screen flex-col overflow-hidden bg-[#525252] font-['Noto_Sans',sans-serif] text-[15px] leading-5 text-[#f2f2f2]">
            <TitleBar />
            <MenuBar />
            <FileToolbar />
            <NoteToolbar />
            <div className="flex min-h-0 flex-1">
                <LeftDock />
                <ScoreArea />
                <RightDock />
            </div>
            <div className="flex h-[42px] shrink-0 items-center justify-between px-1">
                <span>Lasso</span>
                <span>1:01:000</span>
            </div>
            <Taskbar />
        </div>
    );
}
